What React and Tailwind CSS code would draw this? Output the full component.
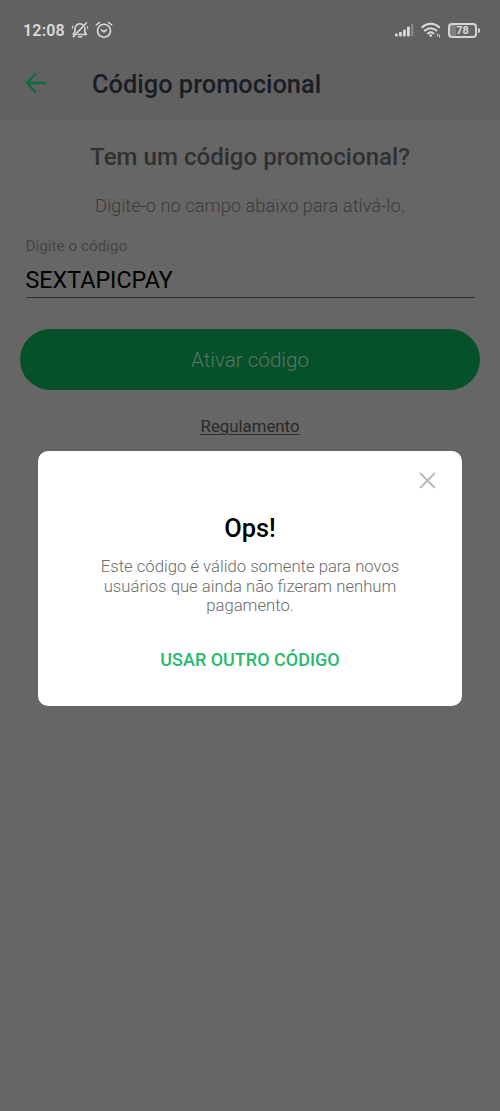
import React from "react";

const MutedBell = () => (
  <svg className="h-[18px] w-[18px]" viewBox="0 0 18 18" fill="none" stroke="currentColor" strokeWidth="1.6" strokeLinecap="round" strokeLinejoin="round">
    <path d="M4 10.6V7.3a4.8 4.8 0 0 1 7.6-3.6M13.8 6.8v4.2l1.6 2.5H7M4 10.6l-1.8 2.7M7.6 15.7h3M2.4 15.6 15.4 2" />
    <path d="M1.2 7.2 2 5M16.2 5.6l.7 2" strokeWidth="1.1" />
  </svg>
);

const AlarmClock = () => (
  <svg className="h-[18px] w-[18px]" viewBox="0 0 18 18" fill="none" stroke="currentColor" strokeWidth="1.6" strokeLinecap="round" strokeLinejoin="round">
    <circle cx="9" cy="9.8" r="6.5" />
    <path d="M6.4 8.9 9 10.9l2.4-2M1.3 4l3-2.4M16.7 4l-3-2.4" />
  </svg>
);

const Signal = () => (
  <svg className="h-[14px] w-[19px]" viewBox="0 0 19 14" fill="currentColor">
    <rect x="0" y="10.6" width="2.8" height="2.8" rx="0.8" />
    <rect x="4" y="9" width="2.8" height="4.4" rx="0.8" />
    <rect x="8" y="6.4" width="2.8" height="7" rx="0.8" />
    <rect x="12" y="3.4" width="2.8" height="10" rx="0.8" />
    <rect x="16" y="0.4" width="2.4" height="13" rx="0.8" opacity="0.3" />
  </svg>
);

const Wifi = () => (
  <svg className="h-[16px] w-[20px]" viewBox="0 0 20 16" fill="none" stroke="currentColor" strokeWidth="2" strokeLinecap="round">
    <path d="M1.3 5.2c4.7-4.5 12.1-4.5 16.8 0M4 8.5c3.2-3 8.2-3 11.4 0M6.9 11.4c1.7-1.4 4-1.4 5.7 0" />
    <circle cx="9.7" cy="13.6" r="1.4" fill="currentColor" stroke="none" />
    <path d="M16.4 12v2M18.4 12.8v2.2" strokeWidth="1" />
  </svg>
);

const Battery = () => (
  <div className="flex items-center gap-px">
    <div className="flex h-[15px] w-[29px] items-center justify-center rounded-[4px] border-2 border-[#d5d5d5] bg-linear-to-r from-[#808080] from-25% to-[#666666] to-25% text-[11px] leading-none font-bold">
      78
    </div>
    <div className="h-[5px] w-[2px] rounded-r-sm bg-[#d5d5d5]" />
  </div>
);

const Header = () => (
  <header className="h-[119px] bg-[#616161]">
    <div className="flex h-[60px] items-center justify-between pr-[20px] pl-[23px] text-[#dadada]">
      <div className="flex items-center">
        <span className="w-[48px] pt-px text-[16px] leading-none font-semibold tracking-[0.2px]">12:08</span>
        <MutedBell />
        <span className="w-[6px]" />
        <AlarmClock />
      </div>
      <div className="flex items-center">
        <Signal />
        <span className="w-[7px]" />
        <Wifi />
        <span className="w-[7px]" />
        <Battery />
      </div>
    </div>
    <div className="flex h-[48px] items-center pl-[25px]">
      <button aria-label="Voltar" className="w-[67px] pb-[2px] text-[#0b6e3c]">
        <svg className="h-[22px] w-[22px]" viewBox="0 0 22 22" fill="none" stroke="currentColor" strokeWidth="2.4" strokeLinecap="round" strokeLinejoin="round">
          <path d="M2 11H20M10.5 2 1.8 11l8.7 9" />
        </svg>
      </button>
      <h1 className="text-[25.4px] leading-[30px] font-medium text-[#1b1d24]">Código promocional</h1>
    </div>
  </header>
);

const ErrorDialog = () => (
  <div className="absolute inset-x-0 top-[451px] flex justify-center">
    <section role="dialog" className="flex h-[255px] w-[424px] flex-col items-center rounded-[10px] bg-white">
      <div className="flex w-full justify-end pt-[21px] pr-[26px]">
        <button aria-label="Fechar" className="text-[#b9b9b9]">
          <svg className="h-[17px] w-[17px]" viewBox="0 0 17 17" fill="none" stroke="currentColor" strokeWidth="1.8">
            <path d="m1 1 15 15M16 1 1 16" />
          </svg>
        </button>
      </div>
      <h3 className="mt-[24px] text-[25.4px] leading-[30px] font-medium text-black">Ops!</h3>
      <p className="mt-[14px] text-center text-[16.7px] leading-[19.5px] font-light text-[#6b6b6b]">
        Este código é válido somente para novos
        <br />
        usuários que ainda não fizeram nenhum
        <br />
        pagamento.
      </p>
      <button className="mt-[33px] text-[18px] leading-[22px] font-medium text-[#27b970]">USAR OUTRO CÓDIGO</button>
    </section>
  </div>
);

export default function App() {
  return (
    <div className="relative h-[1111px] w-[500px] overflow-hidden bg-[#666666] font-['Roboto',sans-serif]">
      <Header />
      <main className="flex flex-col items-center">
        <h2 className="mt-[23px] text-[24.1px] leading-[30px] font-medium text-[#303030]">Tem um código promocional?</h2>
        <p className="mt-[23px] text-[18.3px] leading-[22px] font-light text-[#3a3a3a]">Digite-o no campo abaixo para ativá-lo.</p>
        <label className="mt-[19px] flex w-[449px] flex-col text-[15.3px] leading-[20px] text-[#444444]">
          Digite o código
          <span className="mt-[7px] h-[35px] border-b border-[#303030] pt-px text-[23.3px] leading-[33px] text-black">SEXTAPICPAY</span>
        </label>
        <button className="mt-[31px] h-[61px] w-[460px] rounded-full bg-[#06502a] pt-[2px] text-[20.6px] font-light text-[#5c7565]">Ativar código</button>
        <a className="mt-[26px] text-[16.8px] leading-[20px] text-[#292929] underline decoration-1 underline-offset-2">Regulamento</a>
      </main>
      <ErrorDialog />
    </div>
  );
}
